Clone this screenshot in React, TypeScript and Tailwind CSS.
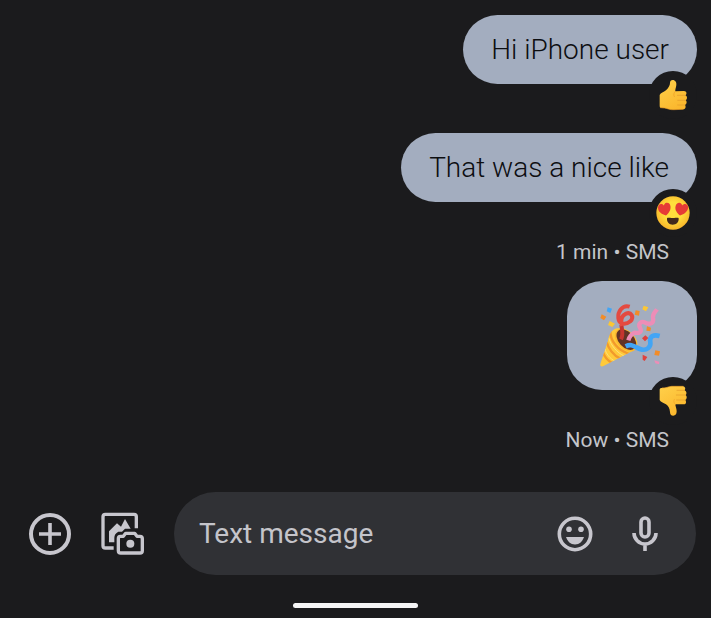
import type { ReactNode } from "react";

function ThumbsUp() {
  return (
    <svg viewBox="49 42 96 96" className="size-8" role="img" aria-label="Thumbs up">
      <defs>
        <linearGradient id="thumb-up" x1="0" y1="0" x2="0.6" y2="1">
          <stop offset="0" stopColor="#ffd04a" />
          <stop offset="1" stopColor="#fbb72d" />
        </linearGradient>
      </defs>
      <path
        d="M57 90C60 83 69 82 76 76C84 68 88 61 88 54C88 48 91 45 96 45C104 45 108 52 107 60C106 68 103 74 104 79L130 78C138 78 140 88 134 91C141 94 140 103 135 106C140 110 138 118 133 120C137 126 134 133 127 133L100 134C88 135 79 130 72 129L60 128C57 128 57 124 57 120Z"
        fill="url(#thumb-up)"
      />
      <path d="M134 91H110M135 106H111M133 120H111" stroke="#e39a2a" strokeWidth="2" strokeLinecap="round" />
      <path d="M104 79C99 84 98 89 101 95M60 128L72 129C79 130 88 135 100 134L127 133" fill="none" stroke="#eb9a22" strokeWidth="2" strokeLinecap="round" />
    </svg>
  );
}

function ThumbsDown() {
  return (
    <svg viewBox="49 59 96 96" className="size-8" role="img" aria-label="Thumbs down">
      <defs>
        <linearGradient id="thumb-down" x1="0" y1="0" x2="0.6" y2="1">
          <stop offset="0" stopColor="#ffd04a" />
          <stop offset="1" stopColor="#fbb72d" />
        </linearGradient>
      </defs>
      <path
        d="M57 74C57 69 59 67 65 68C76 69 82 64 93 63L127 63C133 64 136 70 132 75C138 78 139 86 135 89C140 93 139 101 134 104C138 110 136 117 130 117L104 117C104 123 108 130 108 138C108 147 104 151 98 151C91 151 88 147 88 140C87 130 84 123 76 117C68 112 59 110 57 104Z"
        fill="url(#thumb-down)"
      />
      <path d="M132 75H109M135 89H107M134 104H108" stroke="#e39a2a" strokeWidth="2" strokeLinecap="round" />
      <path d="M127 63L93 63C82 64 76 69 65 68M104 117C99 113 98 108 101 102" fill="none" stroke="#f0a52a" strokeWidth="2" strokeLinecap="round" />
    </svg>
  );
}

function HeartEyes() {
  return (
    <svg viewBox="45 45 108 102" className="h-[34px] w-9" role="img" aria-label="Smiling face with heart eyes">
      <defs>
        <radialGradient id="face" cx="0.5" cy="0.45" r="0.55">
          <stop offset="0.5" stopColor="#ffdf3c" />
          <stop offset="1" stopColor="#f8b52b" />
        </radialGradient>
        <path id="heart" d="M0 19C-9 14-19 6-19-5C-19-13-14-18-8-18C-4-18-1-15 0-12C2-15 5-18 9-18C16-18 20-12 19-5C18 6 9 14 0 19Z" />
      </defs>
      <circle cx="99" cy="96" r="50" fill="url(#face)" />
      <g fill="#e63b36">
        <use href="#heart" transform="translate(74 85) rotate(-12)" />
        <use href="#heart" transform="translate(124 85) rotate(12)" />
      </g>
      <path d="M81 112C83 109 87 111 98 111C110 111 114 109 116 112C117 124 109 131 98 131C88 131 80 124 81 112Z" fill="#42291c" />
    </svg>
  );
}

function PartyPopper() {
  return (
    <svg viewBox="27 22 198 201" className="h-[67px] w-[66px]" role="img" aria-label="Party popper">
      <defs>
        <clipPath id="cone">
          <path d="M80 101C64 106 58 120 54 138L31 208C30 214 33 217 39 215L123 171C139 166 144 156 142 143C139 124 104 96 80 101Z" />
        </clipPath>
      </defs>
      <g clipPath="url(#cone)">
        <path d="M20 90H150V225H20Z" fill="#ffca3b" />
        <path d="M61 108C60 138 83 168 118 178M50 142C54 160 71 183 91 192M39 173C44 188 53 198 69 207" fill="none" stroke="#f29a2c" strokeWidth="7" />
        <path d="M57 131C62 151 81 175 103 184M45 163C48 176 59 192 76 200" fill="none" stroke="#ffe07a" strokeWidth="3" />
      </g>
      <ellipse cx="108" cy="136" rx="40" ry="27" transform="rotate(48 108 136)" fill="#fbb92f" />
      <ellipse cx="109" cy="135" rx="36" ry="23" transform="rotate(48 109 135)" fill="#613326" />
      <g fill="none" strokeLinejoin="round">
        <path d="M93 134C101 119 96 105 94 91" stroke="#c53530" strokeWidth="12" />
        <path d="M119 36C96 29 83 53 85 70C87 91 108 91 121 80C134 67 123 51 108 57C93 64 91 78 96 94" stroke="#e44a40" strokeWidth="12" />
        <path d="M115 137C119 123 124 118 133 114C148 117 157 112 150 99C143 86 154 78 166 84C184 92 192 84 189 69C187 57 196 52 201 44" stroke="#ed8db7" strokeWidth="13" />
        <path d="M107 155C126 146 132 156 150 163C171 171 183 155 181 144C177 125 190 119 209 124" stroke="#42a5f5" strokeWidth="14" />
      </g>
      <path d="M53 38L66 42L61 55L50 50Z" fill="#42a5f5" />
      <path d="M35 59L49 66L42 77L31 70ZM137 47L149 49L147 63L134 60ZM171 95L183 99L181 110L169 108ZM196 167L210 170L207 183L193 181Z" fill="#f28c28" />
      <path d="M59 79L75 87L67 97L54 91ZM161 33L175 38L168 50L157 44Z" fill="#fcc733" />
      <path d="M166 122L175 130L165 140L156 131ZM158 180L172 187L164 199L158 195Z" fill="#df413d" />
      <path d="M193 197L208 201L207 209L196 206Z" fill="#ed8db7" />
    </svg>
  );
}

function GalleryIcon() {
  return (
    <svg viewBox="303 100 132 129" className="h-[43px] w-11" fill="none" stroke="currentColor" aria-hidden="true">
      <path d="M409 149V114Q409 107 402 107H316Q309 107 309 114V201Q309 208 316 208H341" strokeWidth="10" />
      <path d="M327 191V158L351 134L363 144L375 121L392 150H375L366 159H355Q343 165 343 177V191Z" fill="currentColor" stroke="none" />
      <path d="M361 173H370L377 164H404L411 173H420Q427 173 427 180V216Q427 223 420 223H362Q355 223 355 216V180Q355 173 361 173Z" strokeWidth="10" strokeLinejoin="round" />
      <circle cx="391" cy="195" r="12" fill="currentColor" stroke="none" />
    </svg>
  );
}

function Bubble({ children, reaction, className }: { children: ReactNode; reaction: ReactNode; className: string }) {
  return (
    <div className={`relative w-fit bg-[#a3adbf] text-[#0d0e11] ${className}`}>
      {children}
      <span className="absolute -bottom-[35px] right-0 flex size-12 items-center justify-center rounded-full bg-[#1b1b1d]">
        {reaction}
      </span>
    </div>
  );
}

function Meta({ time }: { time: string }) {
  return <p className="mt-9 pr-7 text-[21px] leading-7 text-[#c4c5ca]">{time} • SMS</p>;
}

export default function App() {
  return (
    <main className="flex min-h-screen flex-col bg-[#1b1b1d] font-['Roboto',sans-serif]">
      <section className="flex flex-col items-end px-[14px] pt-[15px]" aria-label="Conversation">
        <Bubble className="rounded-full px-7 py-4 text-[28px] leading-[37px] font-light" reaction={<ThumbsUp />}>
          Hi iPhone user
        </Bubble>
        <Bubble className="mt-[49px] rounded-full px-7 py-4 text-[28px] leading-[37px] font-light" reaction={<HeartEyes />}>
          That was a nice like
        </Bubble>
        <Meta time="1 min" />
        <Bubble className="mt-[15px] rounded-[35px] px-8 py-[21px]" reaction={<ThumbsDown />}>
          <PartyPopper />
        </Bubble>
        <Meta time="Now" />
      </section>

      <form className="mt-[38px] flex items-center pl-7 pr-[15px] text-[#c7c6cd]">
        <button type="button" aria-label="Add attachment" className="mr-[29px]">
          <svg viewBox="0 0 44 44" className="size-11" fill="none" stroke="currentColor" aria-hidden="true">
            <circle cx="22" cy="22" r="19" strokeWidth="4" />
            <path d="M22 11V33M11 22H33" strokeWidth="3.6" />
          </svg>
        </button>
        <button type="button" aria-label="Open gallery" className="mr-[29px]">
          <GalleryIcon />
        </button>
        <div className="flex h-[83px] min-w-0 flex-1 items-center rounded-full bg-[#303135] pl-[25px] pr-[34px]">
          <input
            type="text"
            aria-label="Text message"
            placeholder="Text message"
            className="min-w-0 flex-1 bg-transparent text-[28px] leading-9 outline-none placeholder:text-[#c4c4ca]"
          />
          <button type="button" aria-label="Insert emoji" className="mr-[35px]">
            <svg viewBox="0 0 36 36" className="size-9" fill="none" stroke="currentColor" aria-hidden="true">
              <circle cx="18" cy="18" r="15.7" strokeWidth="3.6" />
              <g fill="currentColor" stroke="none">
                <circle cx="12" cy="13.3" r="2.8" />
                <circle cx="24" cy="13.3" r="2.8" />
                <path d="M9 21H27C25.5 25.5 22.5 28.5 18 28.5C13.5 28.5 10.5 25.5 9 21Z" />
              </g>
            </svg>
          </button>
          <button type="button" aria-label="Record voice message">
            <svg viewBox="0 0 34 36" className="h-9 w-[34px]" fill="none" stroke="currentColor" strokeWidth="3.6" aria-hidden="true">
              <rect x="13" y="2" width="8" height="19" rx="4" />
              <path d="M6 17C6 23 11 28 17 28C23 28 28 23 28 17M17 28V35" />
            </svg>
          </button>
        </div>
      </form>

      <div className="mx-auto mt-7 mb-[10px] h-[5px] w-[125px] rounded-full bg-[#f5f5f6]" />
    </main>
  );
}
